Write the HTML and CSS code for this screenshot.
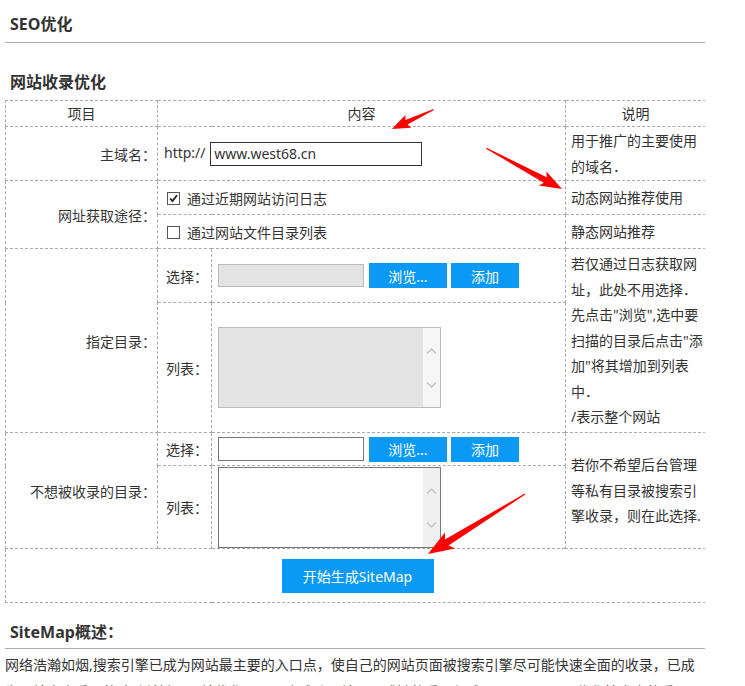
FILE: index.html
```html
<!DOCTYPE html>
<html lang="zh-CN">
  <head>
    <meta charset="UTF-8" />
    <meta name="viewport" content="width=device-width, initial-scale=1.0" />
    <title>SEO优化</title>
    <link rel="stylesheet" href="styles.css">
  </head>
  <body>
    <main class="page">
      <h2 class="title">SEO优化</h2>
      <h3 class="subtitle">网站收录优化</h3>
      <table class="grid">
        <colgroup>
          <col class="c-label">
          <col class="c-sub">
          <col class="c-main">
          <col class="c-note">
        </colgroup>
        <tr class="row-head">
          <th>项目</th>
          <th colspan="2">内容</th>
          <th>说明</th>
        </tr>
        <tr class="row-domain">
          <td class="label">主域名：</td>
          <td colspan="2" class="cell">http:// <input class="domain" type="text" value="www.west68.cn"></td>
          <td class="note">用于推广的主要使用的域名．</td>
        </tr>
        <tr class="row-way">
          <td class="label" rowspan="2">网址获取途径：</td>
          <td colspan="2" class="cell check-cell">
            <span class="check on"><svg viewBox="0 0 13 13"><path d="M2.5 6.5 L5.3 9.6 L10.6 2.6" /></svg></span>通过近期网站访问日志
          </td>
          <td class="note">动态网站推荐使用</td>
        </tr>
        <tr class="row-way">
          <td colspan="2" class="cell check-cell">
            <span class="check"></span>通过网站文件目录列表
          </td>
          <td class="note">静态网站推荐</td>
        </tr>
        <tr class="row-pick">
          <td class="label" rowspan="2">指定目录：</td>
          <td class="sub">选择：</td>
          <td class="cell">
            <input class="pick off" type="text" disabled><button class="btn browse">浏览...</button><button class="btn add">添加</button>
          </td>
          <td class="note" rowspan="2">若仅通过日志获取网址，此处不用选择．先点击"浏览",选中要扫描的目录后点击"添加"将其增加到列表中．<br>/表示整个网站</td>
        </tr>
        <tr class="row-list">
          <td class="sub">列表：</td>
          <td class="cell">
            <div class="listbox off">
              <div class="area"></div>
              <div class="bar">
                <svg viewBox="0 0 11 6"><path d="M1 5.5 L5.5 1 L10 5.5" /></svg>
                <svg viewBox="0 0 11 6"><path d="M1 0.5 L5.5 5 L10 0.5" /></svg>
              </div>
            </div>
          </td>
        </tr>
        <tr class="row-pick2">
          <td class="label" rowspan="2">不想被收录的目录：</td>
          <td class="sub">选择：</td>
          <td class="cell">
            <input class="pick" type="text"><button class="btn browse">浏览...</button><button class="btn add">添加</button>
          </td>
          <td class="note" rowspan="2">若你不希望后台管理等私有目录被搜索引擎收录，则在此选择.</td>
        </tr>
        <tr class="row-list2">
          <td class="sub">列表：</td>
          <td class="cell">
            <div class="listbox">
              <div class="area"></div>
              <div class="bar">
                <svg viewBox="0 0 11 6"><path d="M1 5.5 L5.5 1 L10 5.5" /></svg>
                <svg viewBox="0 0 11 6"><path d="M1 0.5 L5.5 5 L10 0.5" /></svg>
              </div>
            </div>
          </td>
        </tr>
        <tr class="row-submit">
          <td colspan="4" class="center">
            <button class="btn start">开始生成SiteMap</button>
          </td>
        </tr>
      </table>

      <h3 class="title2">SiteMap概述：</h3>
      <p class="intro">网络浩瀚如烟,搜索引擎已成为网站最主要的入口点，使自己的网站页面被搜索引擎尽可能快速全面的收录，已成为网站突出重围的致胜关键，网站优化已是一个成功网站不可或缺的重要组成，SiteMap即是优化技术中的重要一环。</p>

      <!-- red arrows drawn over the screenshot -->
      <svg class="arrows" width="745" height="686" viewBox="0 0 745 686">
        <g transform="translate(392 129) rotate(155)">
          <polygon points="0,0 -18,-7 -16,-2.5 -46,-0.6 -46,0.6 -16,2.5 -18,7" />
        </g>
        <g transform="translate(562 189) rotate(28.3)">
          <polygon points="0,0 -22,-8 -19,-3 -86,-0.6 -86,0.6 -19,3 -22,8" />
        </g>
        <g transform="translate(428 554) rotate(148.3)">
          <polygon points="0,0 -26,-9.5 -22,-3.5 -114,-0.6 -114,0.6 -22,3.5 -26,9.5" />
        </g>
      </svg>
    </main>
  </body>
</html>
```

FILE: styles.css
```css
body {
  margin: 0;
  font-family: "Noto Sans", "Noto Sans CJK SC", sans-serif;
  font-size: 14px;
  color: #333;
  background: #fff;
}
.page {
  position: relative;
  width: 700px;
  height: 686px;
  padding-left: 5px;
  overflow: hidden;
}
.title {
  margin: 0;
  padding: 12px 5px 6px;
  font-size: 16px;
  line-height: 24px;
  border-bottom: 1px solid #aaa;
}
.subtitle {
  margin: 27px 0 6px;
  padding: 0 5px;
  font-size: 16px;
  line-height: 24px;
}
.grid {
  border-collapse: collapse;
  table-layout: fixed;
  width: 701px;
}
.c-label {
  width: 152px;
}
.c-sub {
  width: 54px;
}
.c-main {
  width: 354px;
}
.c-note {
  width: 140px;
}
.grid th,
.grid td {
  border: 1px dashed #aaa;
  padding: 0;
  vertical-align: middle;
}
.grid th {
  font-weight: normal;
  text-align: center;
  line-height: 20px;
}
.row-head {
  height: 26px;
}
.row-domain {
  height: 54px;
}
.row-way {
  height: 34px;
}
.row-pick {
  height: 54px;
}
.row-list {
  height: 130px;
}
.row-pick2 {
  height: 33px;
}
.row-list2 {
  height: 83px;
}
.row-submit {
  height: 54px;
}
.label {
  text-align: right;
  padding-right: 1px !important;
}
.sub {
  padding-left: 8px !important;
}
.cell {
  padding-left: 6px !important;
}
.note {
  padding: 0 2px 0 5px !important;
  line-height: 25.5px;
}
.center {
  text-align: center;
}
.domain {
  box-sizing: border-box;
  width: 212px;
  height: 24px;
  margin-left: 1px;
  padding: 0 3px;
  border: 1px solid #333;
  font: inherit;
  color: #333;
  vertical-align: middle;
}
.check-cell {
  padding-left: 9px !important;
}
.check {
  display: inline-block;
  box-sizing: border-box;
  width: 13px;
  height: 13px;
  margin-right: 7px;
  border: 1px solid #555;
  vertical-align: -1px;
}
.check svg {
  display: block;
  width: 11px;
  height: 11px;
  fill: none;
  stroke: #222;
  stroke-width: 2.2;
}
.pick {
  box-sizing: border-box;
  width: 146px;
  height: 24px;
  margin: 0 5px 0 0;
  padding: 0 3px;
  border: 1px solid #777;
  background: #fff;
  vertical-align: middle;
}
.pick.off {
  height: 23px;
  border-color: #bbb;
  background: #e3e3e3;
}
.btn {
  height: 25px;
  margin: 0 4px 0 0;
  padding: 0;
  border: none;
  background: #0a9af5;
  color: #fff;
  font: inherit;
  vertical-align: middle;
  cursor: pointer;
}
.browse {
  width: 78px;
}
.add {
  width: 68px;
}
.start {
  width: 152px;
  height: 34px;
  margin: 0;
  position: relative;
  left: 2px;
}
.listbox {
  box-sizing: border-box;
  display: flex;
  width: 223px;
  height: 81px;
  border: 1px solid #777;
  background: #fff;
}
.listbox.off {
  border-color: #bbb;
  background: #e3e3e3;
}
.area {
  flex: 1;
}
.bar {
  display: flex;
  flex-direction: column;
  justify-content: space-between;
  align-items: center;
  width: 17px;
  padding: 20px 0 19px;
  background: #f0f0f0;
}
.off .bar {
  background: #f6f6f6;
}
.bar svg {
  width: 11px;
  height: 6px;
  fill: none;
  stroke: #c2c2c2;
  stroke-width: 1.4;
}
.title2 {
  margin: 17px 0 0;
  padding: 0 5px 4px;
  font-size: 16px;
  line-height: 24px;
  border-bottom: 1px solid #aaa;
}
.intro {
  margin: 0;
  padding-top: 2px;
  line-height: 27px;
}
.arrows {
  position: absolute;
  top: 0;
  left: 0;
  pointer-events: none;
}
.arrows polygon {
  fill: #f00;
}
```
